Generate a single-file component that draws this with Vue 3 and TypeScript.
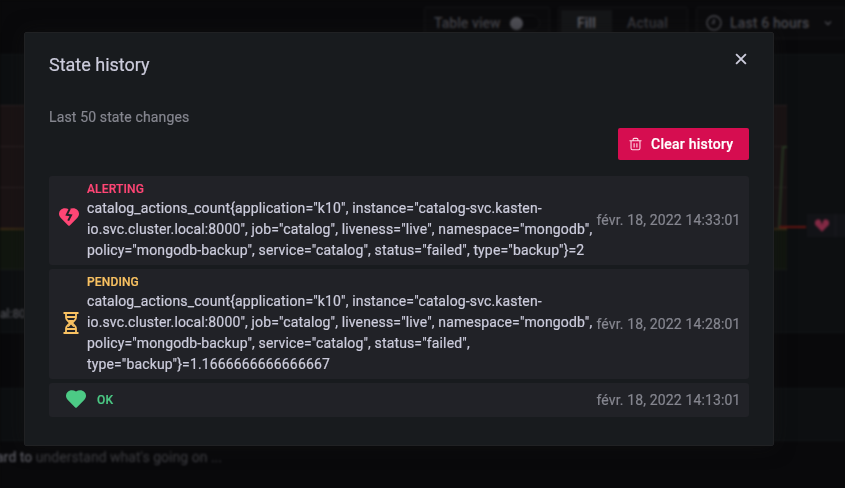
<script setup lang="ts">
interface StateChange {
  state: 'alerting' | 'pending' | 'ok'
  label: string
  info: string
  time: string
}

const labels = 'catalog_actions_count{application="k10", instance="catalog-svc.kasten-io.svc.cluster.local:8000", job="catalog", liveness="live", namespace="mongodb", policy="mongodb-backup", service="catalog", status="failed", type="backup"}'

const changes: StateChange[] = [
  { state: 'alerting', label: 'ALERTING', info: `${labels}=2`, time: 'févr. 18, 2022 14:33:01' },
  { state: 'pending', label: 'PENDING', info: `${labels}=1.1666666666666667`, time: 'févr. 18, 2022 14:28:01' },
  { state: 'ok', label: 'OK', info: '', time: 'févr. 18, 2022 14:13:01' },
]
</script>

<template>
  <div class="page">
    <div class="editor" aria-hidden="true">
      <header class="toolbar">
        <div class="box table-view">Table view <span class="switch"><i></i></span></div>
        <div class="box modes"><b>Fill</b><span>Actual</span></div>
        <div class="box range">
          <svg class="clock" viewBox="0 0 16 16"><circle cx="8" cy="8" r="7" /><path d="M8 4v4H5.5" /></svg>
          <span>Last 6 hours</span>
          <svg class="chevron" viewBox="0 0 8 6"><path d="M1 1.5l3 3 3-3" /></svg>
        </div>
      </header>
      <section class="panel graph">
        <div class="plot">
          <div class="band"></div><div class="band"></div><div class="band"></div>
          <div class="band good"></div>
          <svg class="series" viewBox="0 0 40 90"><path d="M2 84L6 2H10" /></svg>
          <div class="threshold"></div>
          <div class="handle">
            <svg viewBox="0 0 20 18"><path d="M10 18L1.5 9.5A5 5 0 0 1 8 1.4L10 8l2-6.6a5 5 0 0 1 6.5 8.1Z" /></svg>
            <i></i>
          </div>
        </div>
        <div class="legend">al:80</div>
      </section>
      <section class="panel options"></section>
      <footer class="description"><b>ard to</b> understand what's going on ...</footer>
    </div>

    <div class="modal" role="dialog">
      <div class="modal-header">
        <h2>State history</h2>
        <button class="close" aria-label="Close">
          <svg viewBox="0 0 14 14"><path d="M1.3 1.3l11.4 11.4M12.7 1.3L1.3 12.7" /></svg>
        </button>
      </div>
      <div class="modal-body">
        <p>Last 50 state changes</p>
        <button class="clear">
          <svg viewBox="0 0 14 14"><path d="M.5 3.5h13M4.4 3.5V2.2Q4.4 1 5.6 1h2.8q1.2 0 1.2 1.2v1.3M2.2 3.5v8q0 1.7 1.5 1.7h6.6q1.5 0 1.5-1.7v-8M5.5 6.2v4.5M8.5 6.2v4.5" /></svg>
          <span>Clear history</span>
        </button>
        <ol>
          <li v-for="change in changes" :key="change.time" :class="change.state">
            <div class="icon">
              <svg v-if="change.state === 'pending'" class="hourglass" viewBox="0 0 16 22">
                <path d="M.5 1h15M.5 21h15M3 1v4.5Q3 7 4.2 8.2L7 11l-2.8 2.8Q3 15 3 16.5V21M13 1v4.5Q13 7 11.8 8.2L9 11l2.8 2.8Q13 15 13 16.5V21M3 5h10M3 17h10" />
                <path class="sand" d="M5 8h6L8.7 11l2.6 3.4-1 .6L8 12.4 5.7 15l-1-.6L7.3 11Z" />
              </svg>
              <svg v-else class="heart" viewBox="0 0 20 18">
                <path class="shape" d="M9.2 17.4L1.6 9.8A5.4 5.4 0 0 1 1.6 2.1C3.6-.1 7.1-.4 10 1.5c2.9-1.9 6.4-1.6 8.4.6a5.4 5.4 0 0 1 0 7.7l-7.6 7.6q-.8.8-1.6 0Z" />
                <path v-if="change.state === 'alerting'" class="crack" d="M10.8 .8L7.8 6.8l4.2.6-2.8 5.2" />
              </svg>
            </div>
            <div class="detail">
              <div class="state">{{ change.label }}</div>
              <div v-if="change.info" class="info">{{ change.info }}</div>
            </div>
            <time>{{ change.time }}</time>
          </li>
        </ol>
      </div>
    </div>
  </div>
</template>

<style>
body { margin: 0; background: #09090b; overflow: hidden; }
</style>

<style scoped>
* { box-sizing: border-box; }
svg { display: block; fill: none; stroke: currentColor; flex: none; }
button { border: 0; padding: 0; font: inherit; letter-spacing: inherit; }
.page {
  position: relative;
  width: 845px;
  height: 488px;
  overflow: hidden;
  font: 14px/21px Roboto, sans-serif;
  letter-spacing: 0.14px;
  color: #ccccdc;
}
.editor {
  display: flex;
  flex-direction: column;
  height: 488px;
  background: #09090b;
  color: #434349;
  filter: blur(0.8px);
  font-weight: 500;
}
.toolbar { display: flex; justify-content: flex-end; gap: 8px; height: 54px; padding-top: 7px; flex: none; }
.box { display: flex; align-items: center; height: 32px; border: 1px solid #131416; background: #0b0b0d; border-radius: 2px; }
.table-view { width: 126px; padding-left: 9px; gap: 8px; letter-spacing: 0.05px; }
.switch { width: 31px; height: 16px; border-radius: 8px; border: 1px solid #141517; background: #09090b; display: flex; align-items: center; }
.switch i { width: 13px; height: 13px; flex: none; border-radius: 50%; background: #505057; }
.modes { width: 130px; padding: 2px; }
.modes b { width: 51px; height: 26px; line-height: 26px; text-align: center; background: #151618; color: #606068; font-weight: 600; }
.modes span { flex: 1; text-align: center; color: #3a3a40; padding-right: 2px; }
.range { width: 150px; padding-left: 9px; margin-right: -1px; color: #4a4a50; }
.clock { width: 16px; height: 16px; stroke-width: 1.5; }
.range span { margin-left: 8px; letter-spacing: 0.15px; }
.chevron { width: 8px; height: 6px; margin-left: 15px; stroke-width: 1.3; }
.panel { background: #0d0f11; border-top: 1px solid #111416; border-bottom: 1px solid #111416; flex: none; }
.graph { height: 279px; padding-top: 50px; }
.plot { position: relative; width: 787px; }
.band { height: 41px; border-top: 1px solid #2a2122; background: #1a1314; }
.band.good { height: 42px; border-top: 2px solid #3a2b15; border-bottom: 1px solid #191d19; background: #11160f; }
.series { position: absolute; left: 777px; top: 40px; width: 40px; height: 90px; color: #293a25; stroke-width: 2; }
.threshold { position: absolute; left: 779px; top: 121px; width: 27px; height: 2px; background: #651511; }
.handle { position: absolute; left: 807px; top: 109px; width: 40px; height: 23px; background: #121317; }
.handle svg { width: 14px; height: 13px; margin: 5px 0 0 8px; fill: #822944; stroke: none; }
.handle i { position: absolute; left: 28px; top: 0; height: 23px; width: 1px; background: #1a1a1f; }
.legend { padding-top: 34px; font-size: 12px; letter-spacing: -0.1px; color: #505056; }
.options { height: 53px; margin-top: 55px; }
.description { height: 47px; padding-top: 6px; color: #404045; font-weight: 400; letter-spacing: 0.02px; margin-left: -4px; white-space: nowrap; }
.description b { color: #58585f; font-weight: 500; }
.modal {
  position: absolute;
  left: 24px;
  top: 32px;
  width: 750px;
  height: 414px;
  padding: 0 24px;
  background: #181b1e;
  border: 1px solid #202123;
  border-radius: 2px;
  box-shadow: 0 0 20px #14141480;
  -webkit-text-stroke: 0.2px currentColor;
}
.modal-header { display: flex; align-items: center; justify-content: space-between; height: 64px; }
h2 { margin: 0; font-size: 18px; line-height: 22px; font-weight: 400; letter-spacing: 0; }
.close { background: none; color: #ccccdc; margin-right: 2px; padding-bottom: 13px; }
.close svg { width: 12px; height: 12px; stroke-width: 2.2; }
.modal-body { display: flex; flex-direction: column; padding-top: 10px; }
p { margin: 0; color: #85868f; }
.clear {
  align-self: flex-end;
  display: flex;
  align-items: center;
  gap: 9px;
  width: 131px;
  height: 32px;
  padding-left: 11px;
  background: #d60d50;
  border-radius: 2px;
  color: #fff;
  font-weight: 500;
  letter-spacing: 0.25px;
}
.clear svg { width: 13px; height: 14px; stroke-width: 1.2; color: #ffd9e5; overflow: visible; }
.clear span { white-space: nowrap; }
ol { display: flex; flex-direction: column; gap: 4px; margin: 16px 0 0; padding: 0; list-style: none; }
li { display: flex; align-items: center; padding: 4px 9px; border-radius: 3px; background: #212227; }
.icon { width: 29px; display: flex; flex: none; }
.detail { width: 509.5px; flex: none; }
.state { font-size: 12px; line-height: 18px; font-weight: 500; letter-spacing: 0.15px; }
.info { padding-right: 2px; }
time { color: #85868f; white-space: nowrap; }
.alerting .icon { padding: 0 0 8px 1px; }
.heart { width: 20px; height: 18px; }
.shape { fill: currentColor; stroke: none; }
.crack { stroke: #212227; stroke-width: 2; }
.pending .icon { padding-bottom: 2px; }
.hourglass { width: 16px; height: 22px; margin-left: 5px; stroke-width: 1.8; }
.sand { fill: currentColor; stroke: none; }
.alerting .icon, .alerting .state { color: #ff4675; }
.pending .icon, .pending .state { color: #f9c262; }
.ok .icon, .ok .state { color: #4cca85; }
.ok { height: 34px; }
.ok .icon { width: 39px; padding-left: 8px; padding-bottom: 2px; }
.ok .detail { width: 499.5px; }
</style>
